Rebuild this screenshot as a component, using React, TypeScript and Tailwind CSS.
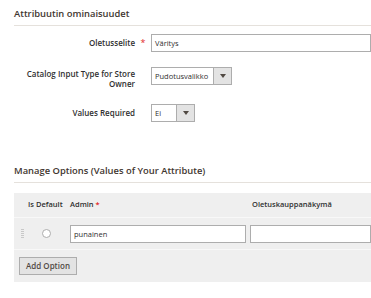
const Arrow = () => (
  <svg width="6" height="4" viewBox="0 0 6 4">
    <path d="M0 0h6L3 4z" fill="#514943" />
  </svg>
);

const Select = ({ value, width }: { value: string; width: string }) => (
  <div className={`flex h-[18px] border border-[#adadad] bg-white ${width}`}>
    <div className="flex-1 pl-[3px] text-[7.5px] leading-[16px] text-[#303030]">{value}</div>
    <div className="w-[18px] flex items-center justify-center bg-[#e3e3e3] border-l border-[#adadad]">
      <Arrow />
    </div>
  </div>
);

export default function App() {
  return (
    <div className="w-[371px] h-[298px] overflow-hidden bg-white font-['Open_Sans',sans-serif] text-[#303030]">
      <div className="pl-[14px] pt-[7px]">
        <h2 className="text-[9.4px] font-semibold leading-[14px] pb-[4px] text-[#41362f] border-b border-[#e5e1dc]">
          Attribuutin ominaisuudet
        </h2>

        <div className="mt-[8px] flex items-start">
          <div className="w-[121px] text-right text-[8px] font-semibold leading-[18px]">Oletusselite</div>
          <div className="w-[16px] text-center text-[9px] leading-[18px] text-[#e22626]">*</div>
          <div className="flex-1 h-[18px] border border-[#adadad] pl-[3px] text-[7.5px] leading-[16px]">Väritys</div>
        </div>

        <div className="mt-[15px] flex items-start">
          <div className="w-[121px] pt-[2px] text-right text-[8px] font-semibold leading-[10px]">
            Catalog Input Type for Store
            <br />
            Owner
          </div>
          <div className="w-[16px]" />
          <Select value="Pudotusvalikko" width="w-[81px]" />
        </div>

        <div className="mt-[15px] flex items-start">
          <div className="w-[121px] text-right text-[8px] font-semibold leading-[18px]">Values Required</div>
          <div className="w-[16px]" />
          <Select value="Ei" width="w-[44px]" />
        </div>

        <h2 className="mt-[42px] text-[9.4px] font-semibold leading-[14px] pb-[4px] text-[#41362f] border-b border-[#e5e1dc]">
          Manage Options (Values of Your Attribute)
        </h2>

        <div className="mt-[10px] bg-[#efefef]">
          <div className="flex h-[24px] items-center text-[7.5px] font-semibold">
            <div className="w-[14px]" />
            <div className="w-[42px]">Is Default</div>
            <div className="w-[182px]">
              Admin <span className="text-[#e22626]">*</span>
            </div>
            <div className="flex-1">Oletuskauppanäkymä</div>
          </div>
          <div className="flex h-[33px] items-center border-t border-b border-[#f8f8f8]">
            <div className="w-[14px] flex justify-center pl-[2px]">
              <div className="w-[3px] h-[9px] bg-[repeating-linear-gradient(#c8c8c8_0_1px,transparent_1px_2px)]" />
            </div>
            <div className="w-[42px] flex justify-center pr-[6px]">
              <div className="w-[9px] h-[9px] rounded-full border border-[#adadad] bg-white" />
            </div>
            <div className="w-[176px] h-[18px] border border-[#adadad] bg-white pl-[3px] text-[7.5px] leading-[16px]">
              punainen
            </div>
            <div className="w-[4px]" />
            <div className="flex-1 h-[18px] border border-[#adadad] bg-white" />
          </div>
          <div className="h-[32px] flex items-center pl-[5px]">
            <button className="h-[18px] px-[6px] border border-[#adadad] bg-[#e3e3e3] text-[8px] font-semibold leading-[16px] text-[#514943]">
              Add Option
            </button>
          </div>
        </div>
      </div>
    </div>
  );
}
